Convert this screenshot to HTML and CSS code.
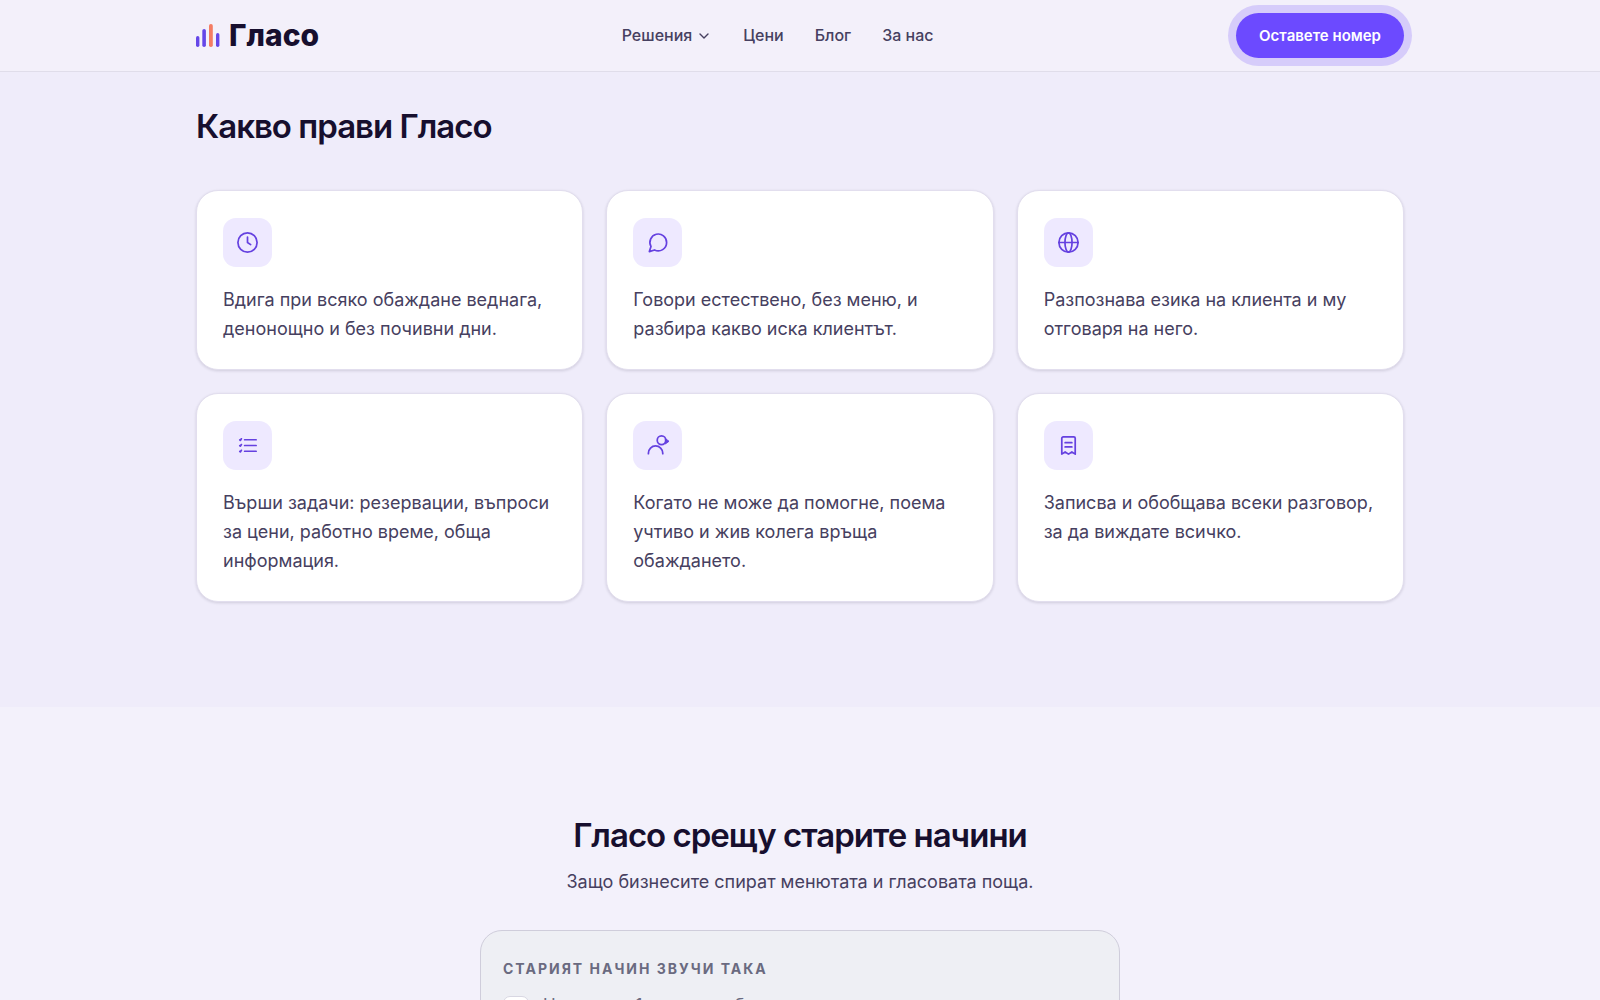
FILE: index.html
```html
<!DOCTYPE html>
<html lang="bg">
<head>
    <meta charset="UTF-8">
    <meta name="viewport" content="width=device-width, initial-scale=1.0">
    <title>Гласо</title>
    <link rel="stylesheet" href="styles.css">
</head>
<body>
    <header class="site-header">
        <div class="container header-row">
            <a class="logo" href="#">
                <svg class="logo-mark" width="24" height="24" viewBox="0 0 24 24" aria-hidden="true">
                    <rect x="0" y="12" width="3.4" height="11" rx="1.7" fill="#6547e8"/>
                    <rect x="6.3" y="5" width="3.6" height="18" rx="1.8" fill="#6547e8"/>
                    <rect x="13" y="0" width="3.8" height="23" rx="1.8" fill="#f47c63"/>
                    <rect x="20" y="9" width="3.4" height="14" rx="1.7" fill="#6547e8"/>
                </svg>
                <span class="logo-text">Гласо</span>
            </a>
            <nav class="main-nav">
                <button class="nav-item" type="button">Решения
                    <svg width="16" height="16" viewBox="0 0 16 16" fill="none" stroke="currentColor" stroke-width="1.4" stroke-linecap="round" stroke-linejoin="round" aria-hidden="true"><path d="M4 6l4 4 4-4"/></svg>
                </button>
                <a class="nav-item" href="#">Цени</a>
                <a class="nav-item" href="#">Блог</a>
                <a class="nav-item" href="#">За нас</a>
            </nav>
            <button class="cta" type="button">Оставете номер</button>
        </div>
    </header>

    <main>
        <section class="features">
            <div class="container">
                <h2>Какво прави Гласо</h2>
                <div class="cards">
                    <article class="card">
                        <div class="card-icon">
                            <svg viewBox="0 0 24 24" aria-hidden="true"><circle cx="12" cy="12" r="10"/><path d="M12 6.5V12l3.3 2.2"/></svg>
                        </div>
                        <p>Вдига при всяко обаждане веднага, денонощно и без почивни дни.</p>
                    </article>
                    <article class="card">
                        <div class="card-icon">
                            <svg viewBox="0 0 24 24" aria-hidden="true"><path d="M21.5 12a8.7 8.7 0 0 1-12.6 7.8L3.5 21.5l1.7-5.4A8.7 8.7 0 1 1 21.5 12z"/></svg>
                        </div>
                        <p>Говори естествено, без меню, и разбира какво иска клиентът.</p>
                    </article>
                    <article class="card">
                        <div class="card-icon">
                            <svg viewBox="0 0 24 24" aria-hidden="true"><circle cx="12" cy="12" r="10"/><path d="M2 12h20"/><ellipse cx="12" cy="12" rx="3.7" ry="10"/></svg>
                        </div>
                        <p>Разпознава езика на клиента и му отговаря на него.</p>
                    </article>
                    <article class="card">
                        <div class="card-icon">
                            <svg viewBox="0 0 24 24" aria-hidden="true"><path d="M9 6h12M9 12h12M9 18h12M4 6.2l.5.5L5.6 5M4 12.2l.5.5L5.6 11M4 18.2l.5.5L5.6 17"/></svg>
                        </div>
                        <p>Върши задачи: резервации, въпроси за цени, работно време, обща информация.</p>
                    </article>
                    <article class="card">
                        <div class="card-icon">
                            <svg viewBox="0 0 24 24" aria-hidden="true"><circle cx="16.2" cy="6.5" r="4.5"/><path d="M2.5 20.5V20a7.5 7.5 0 0 1 15 0v.5"/><path class="solid" d="M20.5 5l3.5 2.6-3.5 2.6z"/></svg>
                        </div>
                        <p>Когато не може да помогне, поема учтиво и жив колега връща обаждането.</p>
                    </article>
                    <article class="card">
                        <div class="card-icon">
                            <svg viewBox="0 0 24 24" aria-hidden="true"><path d="M5 21V4.5A1.5 1.5 0 0 1 6.5 3h11A1.5 1.5 0 0 1 19 4.5V21l-3.5-2.3L12 21l-3.5-2.3zM8.5 9h7M8.5 13.5h7"/></svg>
                        </div>
                        <p>Записва и обобщава всеки разговор, за да виждате всичко.</p>
                    </article>
                </div>
            </div>
        </section>

        <section class="compare">
            <div class="container">
                <h2>Гласо срещу старите начини</h2>
                <p class="lead">Защо бизнесите спират менютата и гласовата поща.</p>
                <div class="old-way">
                    <h3>Старият начин звучи така</h3>
                    <ul>
                        <li><span class="key"></span>Натиснете 1 за продажби</li>
                    </ul>
                </div>
            </div>
        </section>
    </main>
</body>
</html>
```

FILE: styles.css
```css
* {
    box-sizing: border-box;
}

html {
    overflow: hidden;
}

body {
    height: 100vh;
    margin: 0;
    overflow: hidden;
    background: #f3f1fb;
    color: #464060;
    font-family: Inter, "Open Sans", sans-serif;
    font-size: 18px;
    line-height: 29px;
}

h2, h3, p, ul {
    margin: 0;
    padding: 0;
}

h2 {
    color: #170f2e;
    font-size: 33px;
    font-weight: 600;
    line-height: 40px;
    letter-spacing: -1px;
}

.container {
    max-width: 1256px;
    margin: 0 auto;
    padding: 0 24px;
}

/* Header */
.site-header {
    background: #f3f0fa;
    border-bottom: 1px solid #e0ddea;
}

.header-row {
    display: flex;
    align-items: center;
    justify-content: space-between;
    padding-top: 13px;
    padding-bottom: 13px;
}

.logo {
    display: flex;
    align-items: center;
    gap: 9px;
    color: #170f2e;
    text-decoration: none;
}

.logo-text {
    font-size: 30px;
    font-weight: 800;
}

.main-nav {
    display: flex;
    align-items: center;
    gap: 31px;
}

.nav-item {
    display: flex;
    align-items: center;
    gap: 4px;
    padding: 0;
    border: none;
    background: none;
    color: #464060;
    font-family: inherit;
    font-size: 16px;
    font-weight: 500;
    line-height: 25px;
    text-decoration: none;
    cursor: pointer;
}

.cta {
    padding: 10px 23px;
    border: none;
    border-radius: 23px;
    background: #6c4aff;
    box-shadow: 0 0 0 8px #d6ccfa;
    color: #fff;
    font-family: inherit;
    font-size: 15px;
    font-weight: 600;
    line-height: 25px;
    cursor: pointer;
}

/* Features */
.features {
    padding: 34px 0 105px;
    background: #efecfa;
}

.cards {
    display: grid;
    grid-template-columns: repeat(3, 1fr);
    gap: 23px;
    margin-top: 44px;
}

.card {
    padding: 27px 26px 26px;
    border: 1px solid #e2deee;
    border-radius: 22px;
    background: #fff;
    box-shadow: 0 1px 3px rgba(23, 15, 46, 0.14);
}

.card-icon {
    display: flex;
    align-items: center;
    justify-content: center;
    width: 49px;
    height: 49px;
    margin-bottom: 18px;
    border-radius: 13px;
    background: #eee9ff;
}

.card-icon svg {
    width: 23px;
    height: 23px;
    fill: none;
    stroke: #6541e0;
    stroke-width: 1.8;
    stroke-linecap: round;
    stroke-linejoin: round;
}

.card-icon .solid {
    fill: #6541e0;
    stroke-width: 1;
}

/* Comparison */
.compare {
    padding: 108px 0;
}

.compare h2, .lead {
    text-align: center;
}

.lead {
    margin-top: 12px;
}

.old-way {
    max-width: 640px;
    margin: 34px auto 0;
    padding: 25px 22px;
    border: 1px solid #cfcddb;
    border-radius: 22px;
    background: #eeeff4;
    color: #6a6a80;
}

.old-way h3 {
    font-size: 14px;
    font-weight: 700;
    line-height: 26px;
    letter-spacing: 2px;
    text-transform: uppercase;
}

.old-way ul {
    margin-top: 11px;
    list-style: none;
}

.old-way li {
    display: flex;
    align-items: flex-start;
    gap: 14px;
    font-size: 17px;
    line-height: 24px;
}

.key {
    width: 26px;
    height: 26px;
    margin-top: 3px;
    border: 1px solid #d8d7e2;
    border-radius: 7px;
    background: #fff;
}
```
